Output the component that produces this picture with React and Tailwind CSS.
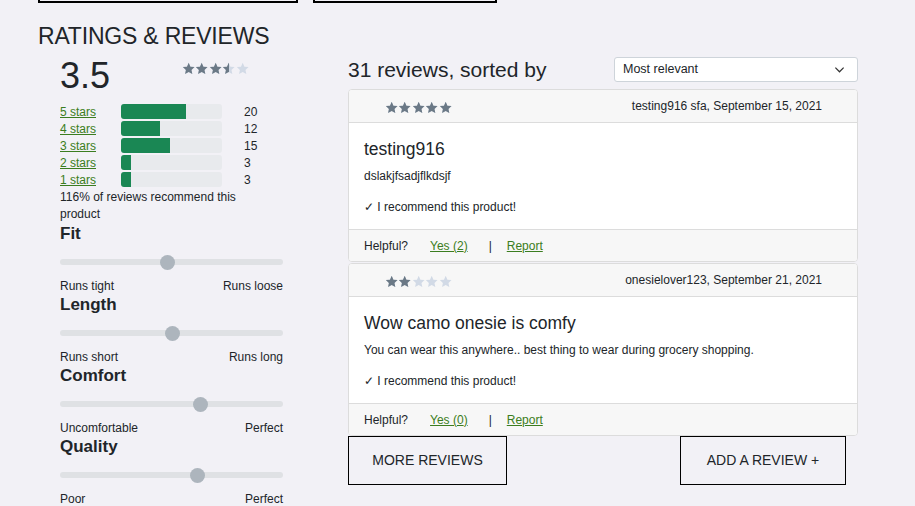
import React from "react"

const ratings = [
  { label: "5 stars", count: 20 },
  { label: "4 stars", count: 12 },
  { label: "3 stars", count: 15 },
  { label: "2 stars", count: 3 },
  { label: "1 stars", count: 3 },
]

const characteristics = [
  { name: "Fit", low: "Runs tight", high: "Runs loose", pos: 48 },
  { name: "Length", low: "Runs short", high: "Runs long", pos: 50.5 },
  { name: "Comfort", low: "Uncomfortable", high: "Perfect", pos: 63 },
  { name: "Quality", low: "Poor", high: "Perfect", pos: 61.5 },
]

const reviews = [
  {
    rating: 5,
    author: "testing916 sfa, September 15, 2021",
    title: "testing916",
    body: "dslakjfsadjflkdsjf",
    helpful: 2,
  },
  {
    rating: 2,
    author: "onesielover123, September 21, 2021",
    title: "Wow camo onesie is comfy",
    body: "You can wear this anywhere.. best thing to wear during grocery shopping.",
    helpful: 0,
  },
]

function StarRow({ color }) {
  return (
    <div className="flex">
      {[0, 1, 2, 3, 4].map((i) => (
        <svg key={i} viewBox="0 0 24 24" className="w-[13.4px] h-[13.4px] shrink-0">
          <polygon
            points="12,1.5 15.1,8.3 22.5,9.1 17,14.2 18.5,21.6 12,17.9 5.5,21.6 7,14.2 1.5,9.1 8.9,8.3"
            fill={color}
          />
        </svg>
      ))}
    </div>
  )
}

function Stars({ value }) {
  const pct = (value / 5) * 100
  return (
    <div className="relative w-[67px]">
      <StarRow color="#d2dae6" />
      <div className="absolute inset-y-0 left-0 overflow-hidden" style={{ width: `${pct}%` }}>
        <StarRow color="#6b7986" />
      </div>
    </div>
  )
}

function Chevron() {
  return (
    <svg viewBox="0 0 12 12" className="w-[11px] h-[11px]">
      <path d="M1.5 4l4.5 4.5L10.5 4" fill="none" stroke="#333" strokeWidth="1.3" />
    </svg>
  )
}

function ReviewCard({ review }) {
  return (
    <div className="bg-white border border-[#dcdcdc] rounded-[4px] overflow-hidden">
      <div className="h-[33px] bg-[#f7f7f7] border-b border-[#dcdcdc] flex items-center justify-between pl-[36px] pr-[35px]">
        <div className="mt-[3px]">
          <Stars value={review.rating} />
        </div>
        <span className="text-[12px] leading-[16px]">{review.author}</span>
      </div>
      <div className="pl-[15px] pt-[16px] pb-[14px]">
        <h3 className="text-[17.5px] leading-[20px] font-medium">{review.title}</h3>
        <p className="text-[12px] leading-[16px] mt-[9px]">{review.body}</p>
        <p className="text-[12px] leading-[16px] mt-[15px]">✓ I recommend this product!</p>
      </div>
      <div className="h-[32px] bg-[#f7f7f7] border-t border-[#dcdcdc] flex items-center pl-[15px] text-[12px]">
        <span>Helpful?</span>
        <a href="#" className="ml-[22px] text-[#3b7d20] underline">
          Yes ({review.helpful})
        </a>
        <span className="ml-[21px]">|</span>
        <a href="#" className="ml-[15px] text-[#3b7d20] underline">
          Report
        </a>
      </div>
    </div>
  )
}

export default function App() {
  return (
    <div className="min-h-screen bg-[#f2f1f6] text-[#212529] font-['Liberation_Sans',Arial,sans-serif]">
      <div className="px-[38px]">
        <div className="flex gap-[15px]">
          <div className="w-[260px] h-[3px] border-2 border-t-0 border-black" />
          <div className="w-[184px] h-[3px] border-2 border-t-0 border-black" />
        </div>

        <h2 className="mt-[19px] text-[23px] leading-[28px] tracking-[-0.2px]">RATINGS &amp; REVIEWS</h2>

        <div className="flex mt-[6px]">
          {/* left: summary + characteristics */}
          <div className="ml-[22px] w-[223px] shrink-0">
            <div className="h-[47px] flex">
              <div className="w-[122px] mt-[2px] text-[36px] leading-[36px]">3.5</div>
              <div className="mt-[6px]">
                <Stars value={3.5} />
              </div>
            </div>

            <div>
              {ratings.map((r) => (
                <div key={r.label} className="h-[17px] flex items-center text-[12px]">
                  <a href="#" className="w-[61px] text-[#3b7d20] underline">
                    {r.label}
                  </a>
                  <div className="w-[101px] h-[14.5px] bg-[#e8eaed] rounded-[3px] overflow-hidden">
                    <div className="h-full bg-[#1a8754]" style={{ width: `${(r.count / 31) * 100}%` }} />
                  </div>
                  <span className="ml-[22px]">{r.count}</span>
                </div>
              ))}
            </div>

            <p className="mt-[1px] text-[12px] leading-[17px] w-[190px]">116% of reviews recommend this product</p>

            {characteristics.map((c) => (
              <div key={c.name} className="mb-[1px]">
                <h4 className="text-[17px] leading-[22px] font-semibold">{c.name}</h4>
                <div className="relative h-[34px] flex items-center">
                  <div className="w-full h-[6px] bg-[#dfe1e4] rounded-full" />
                  <div
                    className="absolute top-1/2 w-[15px] h-[15px] -mt-[7.5px] -ml-[7.5px] rounded-full bg-[#adb5bd]"
                    style={{ left: `${c.pos}%` }}
                  />
                </div>
                <div className="flex justify-between text-[12px] leading-[14px]">
                  <span>{c.low}</span>
                  <span>{c.high}</span>
                </div>
              </div>
            ))}
          </div>

          {/* right: review list */}
          <div className="ml-[65px] w-[510px] shrink-0">
            <div className="flex items-center justify-between mt-[1px] h-[25px]">
              <h3 className="text-[21px] leading-[26px]">31 reviews, sorted by</h3>
              <div className="w-[244px] h-[25px] bg-white border border-[#ced4da] rounded-[3px] flex items-center justify-between pl-[8px] pr-[12px] text-[12.5px]">
                <span>Most relevant</span>
                <Chevron />
              </div>
            </div>

            <div className="mt-[7px] flex flex-col gap-[1px]">
              {reviews.map((r) => (
                <ReviewCard key={r.title} review={r} />
              ))}
            </div>

            <div className="flex justify-between pr-[12px]">
              <button className="w-[159px] h-[49px] border border-black text-[14px]">MORE REVIEWS</button>
              <button className="w-[166px] h-[49px] border border-black text-[14px]">ADD A REVIEW +</button>
            </div>
          </div>
        </div>
      </div>
    </div>
  )
}
